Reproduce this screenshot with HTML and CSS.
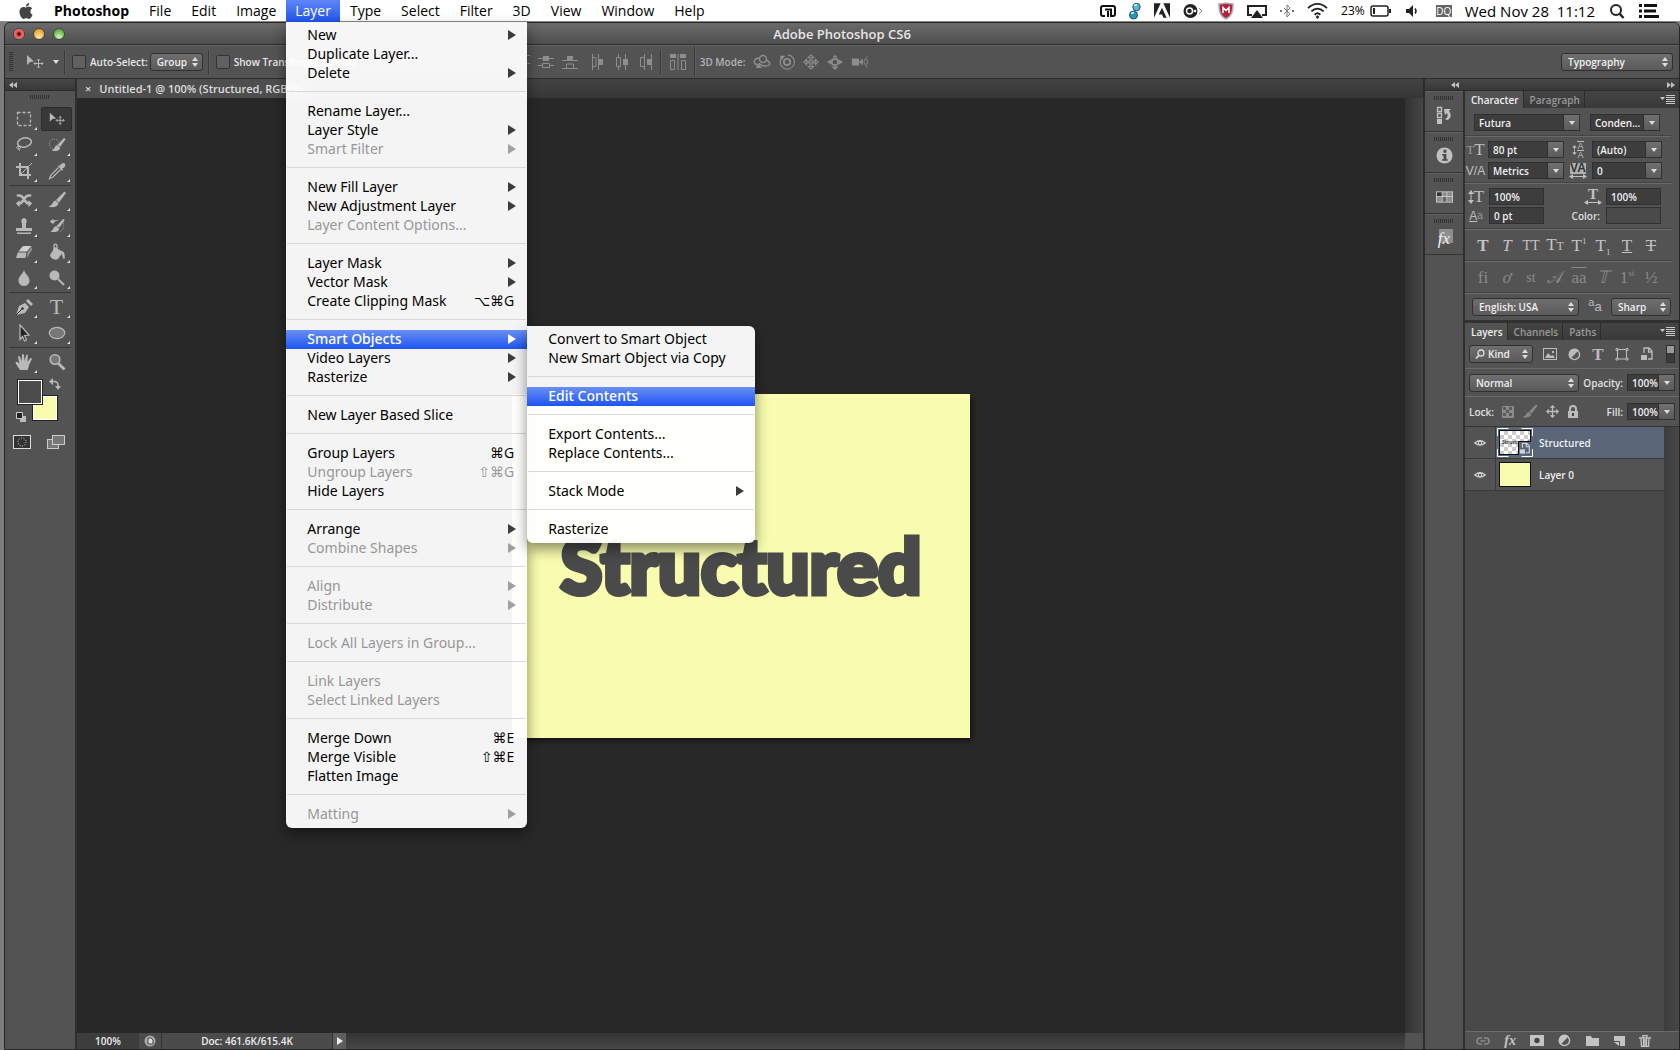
FILE: index.html
```
<!DOCTYPE html>
<html lang="en">

<head>
    <meta charset="UTF-8">
    <title>Adobe Photoshop CS6</title>
    <link rel="stylesheet" href="styles.css">
</head>

<body>
    <!-- icon sprite -->
    <svg class="sprite" aria-hidden="true">
        <symbol id="i-apple" viewBox="0 0 24 24"><path fill="#444" d="M12.152 6.896c-.948 0-2.415-1.078-3.96-1.04-2.04.027-3.91 1.183-4.961 3.014-2.117 3.675-.546 9.103 1.519 12.09 1.013 1.454 2.208 3.09 3.792 3.039 1.52-.065 2.09-.987 3.935-.987 1.831 0 2.35.987 3.96.948 1.637-.026 2.676-1.48 3.676-2.948 1.156-1.688 1.636-3.325 1.662-3.415-.039-.013-3.182-1.221-3.22-4.857-.026-3.04 2.48-4.494 2.597-4.559-1.429-2.09-3.623-2.324-4.39-2.376-2-.156-3.675 1.09-4.61 1.09zM15.53 3.83c.843-1.012 1.4-2.427 1.245-3.83-1.207.052-2.662.805-3.532 1.818-.78.896-1.454 2.338-1.273 3.714 1.338.104 2.715-.688 3.559-1.701"/></symbol>
        <symbol id="i-cast" viewBox="0 0 16 16"><path fill="none" stroke="#111" stroke-width="2" d="M5 13H3a2 2 0 0 1-2-2V5a2 2 0 0 1 2-2h10a2 2 0 0 1 2 2v6a2 2 0 0 1-2 2h-2V6.500H5M8 8v6"/></symbol>
        <symbol id="i-beads" viewBox="0 0 12 18"><circle cx="7.500" cy="5" r="3.700" fill="#58b7d6" stroke="#14546d"/><circle cx="4.500" cy="13" r="4" fill="#2f93bb" stroke="#14546d"/><path d="M5 3.500l3-1M2 11.500l3-1" stroke="#d8f4ff" stroke-width="1.500"/></symbol>
        <symbol id="i-adobe" viewBox="0 0 24 22"><path fill="#222" d="M0 0h10L0 22zM24 0H14l10 22zM12 7l7 15h-5l-2-5H7z"/></symbol>
        <symbol id="i-orb" viewBox="0 0 22 16"><circle cx="7.500" cy="8" r="7" fill="#222"/><circle cx="6.500" cy="8" r="3" fill="none" stroke="#fff" stroke-width="1.500"/><circle cx="12" cy="8" r="1.300" fill="#fff"/><path d="M16 5l3 3-3 3" fill="none" stroke="#888"/></symbol>
        <symbol id="i-shield" viewBox="0 0 16 18"><path fill="#b3203a" stroke="#aaa" stroke-width="1.500" d="M1 2c3 0 5-.5 7-1 2 .5 4 1 7 1 0 7-1 12-7 15C2 14 1 9 1 2z"/><path fill="none" stroke="#fff" stroke-width="1.500" d="M5 11V5.500l3 3 3-3V11"/></symbol>
        <symbol id="i-airplay" viewBox="0 0 20 16"><path fill="none" stroke="#222" stroke-width="2" d="M5 12H1V3h18v9h-4"/><path fill="#222" d="M10 7l6 8H4z"/></symbol>
        <symbol id="i-bt" viewBox="0 0 14 16"><path fill="none" stroke="#777" d="M4 5l6 6-3 3V2l3 3-6 6"/><path fill="#777" d="M0 7h2v2H0zM12 7h2v2h-2z"/></symbol>
        <symbol id="i-wifi" viewBox="0 0 22 18"><path fill="none" stroke="#222" stroke-width="2" d="M1 6.500c6-6 14-6 20 0M4.500 10c4-4 9-4 13 0M8 13.500c2-2 4-2 6 0"/><path fill="#222" d="M11 14l2 2-2 2-2-2z"/></symbol>
        <symbol id="i-battery" viewBox="0 0 22 14"><rect x="1" y="2" width="17" height="10" rx="2" fill="none" stroke="#222" stroke-width="1.500"/><path fill="#222" d="M3 4h2v6H3zM19 5h2v4h-2z"/></symbol>
        <symbol id="i-speaker" viewBox="0 0 18 14"><path fill="#222" d="M1 5h3l4-4v12L4 9H1z"/><path d="M10 4.500q2 2.500 0 5" fill="none" stroke="#222" stroke-width="1.500"/></symbol>
        <symbol id="i-search" viewBox="0 0 18 18"><circle cx="8" cy="8" r="5" fill="none" stroke="#222" stroke-width="2"/><path d="M11.500 11.500l4 4.500" stroke="#222" stroke-width="2.500"/></symbol>
        <symbol id="i-list" viewBox="0 0 20 14"><path fill="#111" d="M0 0h3v3H0zM5 0h13v3H5zM0 5.500h3v3H0zM5 5.500h12v3H5zM0 11h3v3H0zM5 11h15v3H5z"/></symbol>

        <symbol id="i-move" viewBox="0 0 20 16"><path fill="currentColor" d="M2 1l7 6.500-4 .5-3 3z"/><path fill="none" stroke="currentColor" d="M13.500 5v9M9 9.500h9M12 6.500l1.500-1.500L15 6.500M12 12.500l1.500 1.500 1.500-1.500M10.500 8L9 9.500l1.500 1.500M16.500 8L18 9.500 16.500 11"/></symbol>
        <symbol id="i-marquee" viewBox="0 0 18 18"><rect x="2.500" y="2.500" width="13" height="13" fill="none" stroke="currentColor" stroke-width="1.300" stroke-dasharray="3 2"/></symbol>
        <symbol id="i-lasso" viewBox="0 0 18 18"><ellipse cx="9.500" cy="6.500" rx="7" ry="4.500" transform="rotate(-12 9.500 6.500)" fill="none" stroke="currentColor" stroke-width="1.500"/><path d="M4 10c-3 0-3 3-.5 3s2.500-3.500.5-3c-1 2 0 4 1 5" fill="none" stroke="currentColor"/></symbol>
        <symbol id="i-quick" viewBox="0 0 20 18"><circle cx="7" cy="8" r="5.500" fill="none" stroke="currentColor" stroke-dasharray="1 1.500"/><path fill="currentColor" d="M18 1l1.500 1.500-6 8.500-3-2zM10 9l3.500 3c0 3-5 5-9.500 3 4-1 3-5 6-6z"/></symbol>
        <symbol id="i-crop" viewBox="0 0 18 18"><path fill="none" stroke="currentColor" stroke-width="2" d="M5 1v12h11M1 5h12v12"/><path stroke="currentColor" d="M6 12L17 1"/></symbol>
        <symbol id="i-dropper" viewBox="0 0 18 18"><path fill="currentColor" d="M10 4l1-1 1 1c1-3 4-4 5-2s-1 4-3 5l1 1-1 1z"/><path fill="none" stroke="currentColor" stroke-width="1.200" d="M10.500 5.500L3 13l-1.500 3.500L5 15l7.500-7.500"/></symbol>
        <symbol id="i-heal" viewBox="0 0 20 16"><path fill="none" stroke="currentColor" stroke-width="3" d="M2 3h3c5 0 5 9 11 9M18 3h-3C10 3 10 12 4 12"/><path fill="currentColor" d="M5 8v8l-4-4zM15 8v8l4-4z"/></symbol>
        <symbol id="i-brush" viewBox="0 0 18 18"><path fill="currentColor" d="M16.500.500L18 2l-7 9.500-3-2.500zM7.500 9.500l3 2.500c-.5 4-5.500 5-10.500 3.500 4.500-.5 4-5 7.500-6z"/></symbol>
        <symbol id="i-stamp" viewBox="0 0 18 18"><path fill="currentColor" d="M9 1a3 3 0 0 1 2 5v5h6v3H1v-3h6V6a3 3 0 0 1 2-5zM2 15.500h14V17H2z"/></symbol>
        <symbol id="i-history" viewBox="0 0 20 18"><path fill="currentColor" d="M17 1l1.500 1.500-6 8.500-3-2zM9 9l3.500 3c0 3-5 5-10 3 4-1 3-5 6.500-6zM2 4l4-3v2q4-1 7-1-5 1-7 4v1z"/><path d="M17 6q2 6-4 10" fill="none" stroke="currentColor" stroke-dasharray="1 1.500"/></symbol>
        <symbol id="i-eraser" viewBox="0 0 18 18"><path fill="#d0d0d0" d="M8 3h9l-5 6H3z"/><path fill="#8d8d8d" d="M17 3v4l-5 8V9z"/><path fill="currentColor" d="M3 9h9l-1 6H1z"/><path stroke="#555" fill="none" d="M3 9h9l5-6M12 9l-1 6"/></symbol>
        <symbol id="i-bucket" viewBox="0 0 18 18"><path fill="currentColor" d="M7 4l8 5-5 7c-3 2-8-1-8-4z"/><path d="M6 8V3c0-3 3-2 3 0v4" fill="none" stroke="currentColor" stroke-width="1.300"/><path fill="currentColor" d="M14 8c3 1 3 5 2.500 8C14 16 15 12 13 10z"/></symbol>
        <symbol id="i-drop" viewBox="0 0 18 18"><path fill="currentColor" d="M9 1c1 4 5.500 6 5.500 10.500a5.500 5.500 0 0 1-11 0C3.500 7 8 5 9 1z"/></symbol>
        <symbol id="i-dodge" viewBox="0 0 18 18"><circle cx="6.500" cy="6.500" r="5" fill="currentColor"/><path d="M10 10l6 6" stroke="currentColor" stroke-width="2"/></symbol>
        <symbol id="i-pen" viewBox="0 0 18 18"><path fill="currentColor" d="M1 17L4 8l6-3 4 4-4 6zM11 3l2-2 5 5-2 2z"/><path d="M1 17l6-6" stroke="#333"/><circle cx="7.500" cy="10.500" r="1.300" fill="#333"/></symbol>
        <symbol id="i-pick" viewBox="0 0 18 18"><path fill="#222" stroke="currentColor" stroke-width="1.200" d="M5 1l9 10-4.500.5 2 4.500-2 1-2-4.500-2.500 3z"/></symbol>
        <symbol id="i-ellipse" viewBox="0 0 18 18"><ellipse cx="9" cy="9" rx="7.700" ry="5.700" fill="#777" stroke="currentColor" stroke-width="1.200"/></symbol>
        <symbol id="i-hand" viewBox="0 0 18 18"><path fill="currentColor" d="M5 17C3 14 1 11 .5 9.500 1 8 3 9 4.500 11L3 4c0-1.500 1.500-1.500 2 0l1.500 4L7 2c.2-1.500 1.800-1.500 2 0l.5 6L11 2.500c.5-1.500 2-1 1.800.5L12.500 9 15 5.500c1-1 2.200-.2 1.700 1L14 12c-.5 3-1 4-1.500 5z"/></symbol>
        <symbol id="i-zoom" viewBox="0 0 18 18"><circle cx="7" cy="6.500" r="4.800" fill="#777" stroke="currentColor" stroke-width="1.600"/><path d="M10.500 10.500l6 6" stroke="currentColor" stroke-width="2.800"/></symbol>
        <symbol id="i-swap" viewBox="0 0 12 12"><path d="M2 3.500h3q4 0 4 4V10" fill="none" stroke="currentColor" stroke-width="1.500"/><path fill="currentColor" d="M4 0v7L0 3.500zM6 8h6l-3 4z"/></symbol>
        <symbol id="i-default" viewBox="0 0 10 10"><path fill="#bbb" d="M4 4h6v6H4z"/><path fill="#222" stroke="#ccc" d="M.5.500h6v6h-6z"/></symbol>
        <symbol id="i-mask" viewBox="0 0 18 14"><rect x=".500" y=".500" width="17" height="13" fill="#333" stroke="#ddd"/><circle cx="9" cy="7" r="4" fill="none" stroke="#ddd" stroke-dasharray="1 1.500"/></symbol>
        <symbol id="i-screen" viewBox="0 0 18 14"><rect x=".500" y="4.500" width="11" height="9" fill="#777" stroke="#ccc"/><rect x="5.500" y=".500" width="12" height="9" fill="#777" stroke="#ccc"/></symbol>

        <symbol id="i-av1" viewBox="0 0 16 16"><path stroke="currentColor" fill="none" d="M0 1.500h16M0 9.500h16M4 12.500h8v3H4z"/><path fill="currentColor" d="M5 3h6v3H5z"/></symbol>
        <symbol id="i-av2" viewBox="0 0 16 16"><path stroke="currentColor" fill="none" d="M0 4.500h16M0 11.500h4m8 0h4M4.500 9.500h7v4h-7z"/><path fill="currentColor" d="M5 2h6v5H5z"/></symbol>
        <symbol id="i-av3" viewBox="0 0 16 16"><path stroke="currentColor" fill="none" d="M0 6.500h16M0 14.500h16M4.500 14v-4h7v4"/><path fill="currentColor" d="M5 2h6v4H5z"/></symbol>
        <symbol id="i-ah1" viewBox="0 0 16 16"><path stroke="currentColor" fill="none" d="M2.500 0v16M8.500 0v16M3 3.500h3v9H3"/><path fill="currentColor" d="M9 5h4v6H9z"/></symbol>
        <symbol id="i-ah2" viewBox="0 0 16 16"><path stroke="currentColor" fill="none" d="M4.500 0v3m0 10v3M11.500 0v16M2.500 3.500h4v9h-4z"/><path fill="currentColor" d="M9 5h5v6H9z"/></symbol>
        <symbol id="i-ah3" viewBox="0 0 16 16"><path stroke="currentColor" fill="none" d="M6.500 0v16M13.500 0v16M6 3.500H2.500v9H6"/><path fill="currentColor" d="M9 5h4v6H9z"/></symbol>
        <symbol id="i-auto" viewBox="0 0 16 16"><path fill="currentColor" d="M0 0h6v4H0zM10 0h6v4h-6zM7.500 0h1v16h-1z"/><path stroke="currentColor" fill="none" d="M.5 6.500h4v9h-4zM11.500 6.500h4v9h-4z"/></symbol>
        <symbol id="i-orbit" viewBox="0 0 18 16"><circle cx="10" cy="5" r="3.500" fill="none" stroke="currentColor" stroke-width="1.500"/><path fill="none" stroke="currentColor" stroke-width="1.500" d="M6 4C0 5 0 9 4 11M13 6c5 2 5 6 0 6-3 0-6-1-7-3"/><path fill="currentColor" d="M3 14l6 0-4-5z"/></symbol>
        <symbol id="i-roll" viewBox="0 0 18 18"><circle cx="9" cy="9" r="3.500" fill="none" stroke="currentColor" stroke-width="2"/><path fill="none" stroke="currentColor" stroke-width="1.300" d="M4 3a8 8 0 1 0 6-2"/><path fill="currentColor" d="M1 2h6L3 7z"/></symbol>
        <symbol id="i-pan" viewBox="0 0 18 18"><path fill="none" stroke="currentColor" stroke-width="1.200" d="M9 1l3 3h-2v4h4V6l3 3-3 3v-2h-4v4h2l-3 3-3-3h2v-4H4v2L1 9l3-3v2h4V4H6z"/></symbol>
        <symbol id="i-lockmove" viewBox="0 0 14 14"><path stroke="currentColor" stroke-width="1.500" d="M7 1v12M1 7h12"/><path fill="currentColor" d="M7 0l3 3H4zM7 14l3-3H4zM0 7l3-3v6zM14 7l-3-3v6z"/></symbol>
        <symbol id="i-slide" viewBox="0 0 18 18"><circle cx="9" cy="9" r="3.500" fill="none" stroke="currentColor" stroke-width="1.800"/><path fill="currentColor" d="M9 1l3 3H6zM9 18l4-4H5zM0 9l5-3v6zM18 9l-5-3v6z"/></symbol>
        <symbol id="i-cam" viewBox="0 0 20 16"><path fill="currentColor" d="M1 4h8v8H1zM9 8l4-4v8z"/><path d="M18 2l-4 6 4 6M18 5v6" fill="none" stroke="currentColor"/></symbol>

        <symbol id="i-hist" viewBox="0 0 18 18"><path fill="none" stroke="currentColor" stroke-width="1.300" d="M2.500 1.500h4v4h-4zM2.500 7.500h4v4h-4z"/><path fill="currentColor" d="M2 13h5v5H2zM9 3h7l-2 2q4 5-1 9-2 0-3-1 4-2 2-6l-2 2z"/></symbol>
        <symbol id="i-info" viewBox="0 0 18 18"><circle cx="9" cy="9" r="8.500" fill="currentColor"/><path fill="#484848" d="M8 3h3v3H8zM6.500 7.500H11V13h1.500v1.500h-6V13H8V9H6.500z"/></symbol>
        <symbol id="i-swatches" viewBox="0 0 18 12"><rect width="18" height="12" fill="#c4c4c4"/><path fill="#333" d="M1 1h5v4H1z"/><path fill="#8d8d8d" d="M7 1h4v4H7zM12 1h5v4h-5zM1 6h5v5H1zM12 6h5v5h-5z"/><path fill="#666" d="M7 6h4v5H7z"/></symbol>
        <symbol id="i-menu" viewBox="0 0 15 9"><path fill="#c8c8c8" d="M0 2h5L2.500 5zM6 0h9v1H6zM6 2h9v1H6zM6 4h9v1H6zM6 6h9v1H6zM6 8h9v1H6z"/></symbol>
        <symbol id="i-dleft" viewBox="0 0 8 6"><path fill="#c0c0c0" d="M4 0v6L0 3zM8 0v6L4 3z"/></symbol>
        <symbol id="i-dright" viewBox="0 0 8 6"><path fill="#c0c0c0" d="M0 0v6l4-3zM4 0v6l4-3z"/></symbol>
        <symbol id="i-vline" viewBox="0 0 6 14"><path stroke="currentColor" d="M3 2v10"/><path fill="currentColor" d="M3 0l3 4H0zM3 14l3-4H0z"/></symbol>
        <symbol id="i-hline" viewBox="0 0 18 5"><path stroke="currentColor" d="M2 2.500h14"/><path fill="currentColor" d="M0 2.500L4 0v5zM18 2.500L14 0v5z"/></symbol>

        <symbol id="i-glass" viewBox="0 0 10 10"><circle cx="6" cy="4" r="3" fill="none" stroke="#ddd" stroke-width="1.300"/><path d="M4 6L1 9.500" stroke="#ddd" stroke-width="1.600"/></symbol>
        <symbol id="i-image" viewBox="0 0 14 12"><rect x=".500" y=".500" width="13" height="11" fill="none" stroke="currentColor"/><path fill="currentColor" d="M2 10l3-5 3 3 2-1 2 3zM9 3h2v2H9z"/></symbol>
        <symbol id="i-adjust" viewBox="0 0 14 14"><circle cx="7" cy="7" r="5.500" fill="#555" stroke="currentColor" stroke-width="1.500"/><path fill="currentColor" d="M11.500 2.500a6.300 6.300 0 0 0-9 9z"/></symbol>
        <symbol id="i-shape" viewBox="0 0 14 14"><path fill="none" stroke="currentColor" d="M1 1.500h2v2H1zM11 1.500h2v2h-2zM1 11h2v2H1zM11 11h2v2h-2zM3 2.500h8M3 12h8M2.500 3.500V11M11.500 3.500V11"/></symbol>
        <symbol id="i-smart" viewBox="0 0 14 14"><path fill="none" stroke="currentColor" stroke-width="1.300" d="M4 6V1h5l3 3v8H8M8.500 1v4H12"/><path fill="currentColor" d="M1 8h6v5H1z"/></symbol>
        <symbol id="i-checker" viewBox="0 0 12 12"><rect width="12" height="12" fill="#8b8b8b"/><path fill="#5b5b5b" d="M1 1h3v3H1zM7 1h3v3H7zM4 4h3v3H4zM1 7h3v3H1zM7 7h3v3H7z"/></symbol>
        <symbol id="i-lock" viewBox="0 0 12 14"><path fill="currentColor" d="M1 6h10v7H1z"/><path d="M3 6V4a3 3 0 0 1 6 0v2" fill="none" stroke="currentColor" stroke-width="2"/><path fill="#444" d="M5 8h2v3H5z"/></symbol>
        <symbol id="i-eye" viewBox="0 0 12 10"><path fill="#777" stroke="#c9c9c9" stroke-width="1.200" d="M.7 5Q6 0 11.300 5 6 9.500.7 5z"/><circle cx="6" cy="5" r="2" fill="#ddd"/><circle cx="6" cy="5" r="1" fill="#333"/></symbol>
        <symbol id="i-corners" viewBox="0 0 36 29"><path fill="none" stroke="#fff" d="M.5 8V.500h11M24.500.500h11V8M35.500 21v7.500h-11M11.500 28.500H.500V21"/></symbol>
        <symbol id="i-link" viewBox="0 0 14 8"><path fill="none" stroke="#8a8a8a" stroke-width="1.600" d="M6 1H4a3 3 0 0 0 0 6h2M8 1h2a3 3 0 0 1 0 6H8M4.500 4h5"/></symbol>
        <symbol id="i-addmask" viewBox="0 0 14 12"><path fill="currentColor" d="M0 0h14v11H0z"/><circle cx="7" cy="5.500" r="2.700" fill="#444"/></symbol>
        <symbol id="i-folder" viewBox="0 0 13 11"><path fill="currentColor" d="M0 1h5l1 2h7v8H0z"/></symbol>
        <symbol id="i-new" viewBox="0 0 12 12"><path fill="currentColor" d="M1 1h11v10H7V6H1z"/><path fill="currentColor" d="M1 7h5v4z"/></symbol>
        <symbol id="i-trash" viewBox="0 0 12 12"><path fill="none" stroke="currentColor" stroke-width="1.300" d="M0 3h12M4 2.500V.700h4v1.800M2 4l.5 7.300h7L10 4M4.500 4v7M6 4v7M7.500 4v7"/></symbol>
        <symbol id="i-docpage" viewBox="0 0 12 12"><circle cx="6" cy="6" r="5.500" fill="#aaa"/><path fill="#ddd" stroke="#444" d="M4 3h3l2 2v4H4z"/></symbol>
    </svg>

    <header class="menubar">
        <nav class="menus">
            <button class="menu-btn apple" aria-label="Apple"><svg width="16" height="18"><use href="#i-apple"/></svg></button>
            <button class="menu-btn app-name">Photoshop</button>
            <button class="menu-btn">File</button>
            <button class="menu-btn">Edit</button>
            <button class="menu-btn">Image</button>
            <div class="menu-open">
                <button class="menu-btn active">Layer</button>
                <ul class="menu">
                    <li><button class="more">New</button></li>
                    <li><button>Duplicate Layer...</button></li>
                    <li><button class="more">Delete</button></li>
                    <li class="sep"></li>
                    <li><button>Rename Layer...</button></li>
                    <li><button class="more">Layer Style</button></li>
                    <li><button class="more" disabled>Smart Filter</button></li>
                    <li class="sep"></li>
                    <li><button class="more">New Fill Layer</button></li>
                    <li><button class="more">New Adjustment Layer</button></li>
                    <li><button disabled>Layer Content Options...</button></li>
                    <li class="sep"></li>
                    <li><button class="more">Layer Mask</button></li>
                    <li><button class="more">Vector Mask</button></li>
                    <li><button>Create Clipping Mask <kbd>⌥⌘G</kbd></button></li>
                    <li class="sep"></li>
                    <li class="has-sub">
                        <button class="more selected">Smart Objects</button>
                        <ul class="menu submenu">
                            <li><button>Convert to Smart Object</button></li>
                            <li><button>New Smart Object via Copy</button></li>
                            <li class="sep"></li>
                            <li><button class="selected">Edit Contents</button></li>
                            <li class="sep"></li>
                            <li><button>Export Contents...</button></li>
                            <li><button>Replace Contents...</button></li>
                            <li class="sep"></li>
                            <li><button class="more">Stack Mode</button></li>
                            <li class="sep"></li>
                            <li><button>Rasterize</button></li>
                        </ul>
                    </li>
                    <li><button class="more">Video Layers</button></li>
                    <li><button class="more">Rasterize</button></li>
                    <li class="sep"></li>
                    <li><button>New Layer Based Slice</button></li>
                    <li class="sep"></li>
                    <li><button>Group Layers <kbd>⌘G</kbd></button></li>
                    <li><button disabled>Ungroup Layers <kbd>⇧⌘G</kbd></button></li>
                    <li><button>Hide Layers</button></li>
                    <li class="sep"></li>
                    <li><button class="more">Arrange</button></li>
                    <li><button class="more" disabled>Combine Shapes</button></li>
                    <li class="sep"></li>
                    <li><button class="more" disabled>Align</button></li>
                    <li><button class="more" disabled>Distribute</button></li>
                    <li class="sep"></li>
                    <li><button disabled>Lock All Layers in Group...</button></li>
                    <li class="sep"></li>
                    <li><button disabled>Link Layers</button></li>
                    <li><button disabled>Select Linked Layers</button></li>
                    <li class="sep"></li>
                    <li><button>Merge Down <kbd>⌘E</kbd></button></li>
                    <li><button>Merge Visible <kbd>⇧⌘E</kbd></button></li>
                    <li><button>Flatten Image</button></li>
                    <li class="sep"></li>
                    <li><button class="more" disabled>Matting</button></li>
                </ul>
            </div>
            <button class="menu-btn">Type</button>
            <button class="menu-btn">Select</button>
            <button class="menu-btn">Filter</button>
            <button class="menu-btn">3D</button>
            <button class="menu-btn">View</button>
            <button class="menu-btn">Window</button>
            <button class="menu-btn">Help</button>
        </nav>
        <div class="status-icons">
            <svg width="16" height="16"><use href="#i-cast"/></svg>
            <svg width="12" height="18"><use href="#i-beads"/></svg>
            <svg width="16" height="15"><use href="#i-adobe"/></svg>
            <svg width="22" height="16"><use href="#i-orb"/></svg>
            <svg width="16" height="18"><use href="#i-shield"/></svg>
            <svg width="20" height="16"><use href="#i-airplay"/></svg>
            <svg width="14" height="16"><use href="#i-bt"/></svg>
            <svg width="21" height="17"><use href="#i-wifi"/></svg>
            <span class="power">23% <svg width="22" height="14"><use href="#i-battery"/></svg></span>
            <svg width="18" height="14"><use href="#i-speaker"/></svg>
            <span class="input-source">DQ</span>
            <span class="clock">Wed Nov 28 &nbsp;11:12</span>
            <svg width="18" height="18"><use href="#i-search"/></svg>
            <svg width="20" height="14"><use href="#i-list"/></svg>
        </div>
    </header>

    <div class="window">
        <div class="titlebar">
            <div class="lights">
                <button class="light red" aria-label="Close"></button>
                <button class="light amber" aria-label="Minimize"></button>
                <button class="light green" aria-label="Zoom"></button>
            </div>
            <h1>Adobe Photoshop CS6</h1>
        </div>

        <div class="options">
            <span class="grip-v"></span>
            <button class="preset" aria-label="Move tool presets"><svg width="20" height="16"><use href="#i-move"/></svg><i class="caret"></i></button>
            <span class="rule"></span>
            <label class="check"><input type="checkbox"> Auto-Select:</label>
            <span class="select group-select"><select aria-label="Auto-select target"><option>Group</option></select></span>
            <span class="rule"></span>
            <label class="check transform"><input type="checkbox"> Show Transform Controls</label>
            <div class="aligners">
                <svg width="16" height="16"><use href="#i-av1"/></svg>
                <svg width="16" height="16"><use href="#i-av2"/></svg>
                <svg width="16" height="16"><use href="#i-av3"/></svg>
            </div>
            <div class="aligners">
                <svg width="16" height="16"><use href="#i-ah1"/></svg>
                <svg width="16" height="16"><use href="#i-ah2"/></svg>
                <svg width="16" height="16"><use href="#i-ah3"/></svg>
            </div>
            <span class="rule"></span>
            <div class="aligners auto"><svg width="16" height="16"><use href="#i-auto"/></svg></div>
            <span class="rule tall"></span>
            <span class="mode-label">3D Mode:</span>
            <div class="aligners">
                <svg width="18" height="16"><use href="#i-orbit"/></svg>
                <svg width="16" height="16"><use href="#i-roll"/></svg>
                <svg width="16" height="16"><use href="#i-pan"/></svg>
                <svg width="16" height="16"><use href="#i-slide"/></svg>
                <svg width="18" height="16"><use href="#i-cam"/></svg>
            </div>
            <span class="select workspace-select"><select aria-label="Workspace"><option>Typography</option></select></span>
        </div>

        <main class="workspace">
            <aside class="tools">
                <div class="dock-head"><svg width="8" height="6"><use href="#i-dleft"/></svg></div>
                <span class="grip"></span>
                <div class="tool-group">
                    <button class="tool fly" aria-label="Marquee"><svg><use href="#i-marquee"/></svg></button>
                    <button class="tool on" aria-label="Move"><svg><use href="#i-move"/></svg></button>
                    <button class="tool fly" aria-label="Lasso"><svg><use href="#i-lasso"/></svg></button>
                    <button class="tool fly" aria-label="Quick selection"><svg><use href="#i-quick"/></svg></button>
                    <button class="tool fly" aria-label="Crop"><svg><use href="#i-crop"/></svg></button>
                    <button class="tool fly" aria-label="Eyedropper"><svg><use href="#i-dropper"/></svg></button>
                </div>
                <div class="tool-group">
                    <button class="tool fly" aria-label="Content-aware move"><svg><use href="#i-heal"/></svg></button>
                    <button class="tool fly" aria-label="Brush"><svg><use href="#i-brush"/></svg></button>
                    <button class="tool fly" aria-label="Clone stamp"><svg><use href="#i-stamp"/></svg></button>
                    <button class="tool fly" aria-label="History brush"><svg><use href="#i-history"/></svg></button>
                    <button class="tool fly" aria-label="Eraser"><svg><use href="#i-eraser"/></svg></button>
                    <button class="tool fly" aria-label="Paint bucket"><svg><use href="#i-bucket"/></svg></button>
                    <button class="tool fly" aria-label="Blur"><svg><use href="#i-drop"/></svg></button>
                    <button class="tool fly" aria-label="Dodge"><svg><use href="#i-dodge"/></svg></button>
                </div>
                <div class="tool-group">
                    <button class="tool fly" aria-label="Pen"><svg><use href="#i-pen"/></svg></button>
                    <button class="tool fly type-tool">T</button>
                    <button class="tool fly" aria-label="Path selection"><svg><use href="#i-pick"/></svg></button>
                    <button class="tool fly" aria-label="Ellipse"><svg><use href="#i-ellipse"/></svg></button>
                </div>
                <div class="tool-group last">
                    <button class="tool fly" aria-label="Hand"><svg><use href="#i-hand"/></svg></button>
                    <button class="tool" aria-label="Zoom"><svg><use href="#i-zoom"/></svg></button>
                </div>
                <div class="swatch-pair">
                    <button class="swatch back" aria-label="Background colour"></button>
                    <button class="swatch front" aria-label="Foreground colour"></button>
                    <svg class="swap" width="12" height="12"><use href="#i-swap"/></svg>
                    <svg class="defaults" width="10" height="10"><use href="#i-default"/></svg>
                </div>
                <div class="view-modes">
                    <svg width="18" height="14"><use href="#i-mask"/></svg>
                    <svg width="18" height="14"><use href="#i-screen"/></svg>
                </div>
            </aside>

            <section class="document">
                <div class="doc-tabs">
                    <div class="doc-tab"><button aria-label="Close document">×</button> Untitled-1 @ 100% (Structured, RGB/8)</div>
                </div>
                <div class="doc-body">
                    <div class="stage">
                        <div class="artboard">Structured</div>
                    </div>
                    <div class="scroll-v"></div>
                </div>
                <footer class="doc-status">
                    <span class="zoom-level">100%</span>
                    <span class="doc-icon"><svg width="12" height="12"><use href="#i-docpage"/></svg></span>
                    <span class="doc-size">Doc: 461.6K/615.4K</span>
                    <button class="play" aria-label="Status options"></button>
                    <span class="scroll-h"></span>
                    <span class="corner"></span>
                </footer>
            </section>

            <aside class="dock">
                <div class="dock-head split"><svg width="8" height="6"><use href="#i-dleft"/></svg><svg width="8" height="6"><use href="#i-dright"/></svg></div>
                <div class="dock-cols">
                    <div class="strip">
                        <button class="strip-btn" aria-label="History"><i class="grip"></i><svg width="18" height="18"><use href="#i-hist"/></svg></button>
                        <button class="strip-btn" aria-label="Info"><i class="grip"></i><svg width="17" height="17"><use href="#i-info"/></svg></button>
                        <button class="strip-btn" aria-label="Swatches"><i class="grip"></i><svg width="17" height="18"><use href="#i-swatches"/></svg></button>
                        <button class="strip-btn" aria-label="Styles"><i class="grip"></i><span class="fx-tile">fx</span></button>
                    </div>
                    <div class="panels">
                        <section class="panel character">
                            <div class="tabs">
                                <button class="tab on">Character</button>
                                <button class="tab">Paragraph</button>
                                <svg width="15" height="9"><use href="#i-menu"/></svg>
                            </div>
                            <div class="block fonts">
                                <span class="combo"><select aria-label="Font family"><option>Futura</option></select></span>
                                <span class="combo"><select aria-label="Font style"><option>Conden...</option></select></span>
                            </div>
                            <div class="block metrics">
                                <label for="size" class="glyph"><small>T</small>T</label>
                                <span class="combo"><select id="size"><option>80 pt</option></select></span>
                                <label for="leading" class="glyph stacked"><svg width="5" height="10"><use href="#i-vline"/></svg><span><b>A</b><b>A</b></span></label>
                                <span class="combo"><select id="leading"><option>(Auto)</option></select></span>
                                <label for="kerning" class="glyph sans">V/A</label>
                                <span class="combo"><select id="kerning"><option>Metrics</option></select></span>
                                <label for="tracking" class="glyph sans tracking"><b>VA</b><svg width="18" height="5"><use href="#i-hline"/></svg></label>
                                <span class="combo"><select id="tracking"><option>0</option></select></span>
                            </div>
                            <div class="block scales">
                                <label for="vscale" class="glyph"><svg width="6" height="14"><use href="#i-vline"/></svg>T</label>
                                <input id="vscale" class="num" value="100%">
                                <label for="hscale" class="glyph hscale">T<svg width="18" height="5"><use href="#i-hline"/></svg></label>
                                <input id="hscale" class="num" value="100%">
                                <label for="baseline" class="glyph sans shift"><u>A</u><small>a</small></label>
                                <input id="baseline" class="num" value="0 pt">
                                <span class="color-label">Color:</span>
                                <button class="num color-well" aria-label="Text colour"></button>
                            </div>
                            <div class="block faux">
                                <button><b>T</b></button>
                                <button><em>T</em></button>
                                <button>TT</button>
                                <button>T<small>T</small></button>
                                <button>T<sup>1</sup></button>
                                <button>T<sub>1</sub></button>
                                <button><u>T</u></button>
                                <button><s>T</s></button>
                            </div>
                            <div class="block faux opentype">
                                <button>fi</button>
                                <button><em>ơ</em></button>
                                <button>st</button>
                                <button>𝒜</button>
                                <button class="over">aa</button>
                                <button><em>𝕋</em></button>
                                <button>1<sup>st</sup></button>
                                <button>½</button>
                            </div>
                            <div class="block lang">
                                <span class="select"><select aria-label="Language"><option>English: USA</option></select></span>
                                <label for="aa" class="aa"><sup>a</sup>a</label>
                                <span class="select"><select id="aa"><option>Sharp</option></select></span>
                            </div>
                        </section>

                        <section class="panel layers">
                            <div class="tabs">
                                <button class="tab on">Layers</button>
                                <button class="tab">Channels</button>
                                <button class="tab">Paths</button>
                                <svg width="15" height="9"><use href="#i-menu"/></svg>
                            </div>
                            <div class="layer-row filter">
                                <span class="select kind"><svg width="10" height="10"><use href="#i-glass"/></svg><select aria-label="Filter type"><option>Kind</option></select></span>
                                <div class="filter-icons">
                                    <svg width="14" height="12"><use href="#i-image"/></svg>
                                    <svg width="13" height="13"><use href="#i-adjust"/></svg>
                                    <span class="serif-t">T</span>
                                    <svg width="14" height="14"><use href="#i-shape"/></svg>
                                    <svg width="14" height="14"><use href="#i-smart"/></svg>
                                </div>
                                <button class="switch" aria-label="Toggle filter"></button>
                            </div>
                            <div class="layer-row">
                                <span class="select blend"><select aria-label="Blend mode"><option>Normal</option></select></span>
                                <label for="opacity">Opacity:</label>
                                <span class="combo pct"><select id="opacity"><option>100%</option></select></span>
                            </div>
                            <div class="layer-row locks">
                                <span>Lock:</span>
                                <svg width="12" height="12"><use href="#i-checker"/></svg>
                                <svg width="16" height="15" class="dim"><use href="#i-brush"/></svg>
                                <svg width="13" height="13"><use href="#i-lockmove"/></svg>
                                <svg width="12" height="14"><use href="#i-lock"/></svg>
                                <label for="fill">Fill:</label>
                                <span class="combo pct"><select id="fill"><option>100%</option></select></span>
                            </div>
                            <div class="layer-list">
                                <ul>
                                    <li class="layer current">
                                        <button class="eye" aria-label="Hide Structured"><svg width="12" height="10"><use href="#i-eye"/></svg></button>
                                        <span class="thumb checker"><i>Structured</i><svg class="badge" width="13" height="14"><use href="#i-smart"/></svg><svg class="corners" width="36" height="29"><use href="#i-corners"/></svg></span>
                                        <span>Structured</span>
                                    </li>
                                    <li class="layer">
                                        <button class="eye" aria-label="Hide Layer 0"><svg width="12" height="10"><use href="#i-eye"/></svg></button>
                                        <span class="thumb yellow"></span>
                                        <span>Layer 0</span>
                                    </li>
                                </ul>
                            </div>
                            <div class="layer-actions">
                                <svg width="14" height="8"><use href="#i-link"/></svg>
                                <span class="fx">fx</span>
                                <svg width="14" height="12"><use href="#i-addmask"/></svg>
                                <svg width="13" height="13"><use href="#i-adjust"/></svg>
                                <svg width="13" height="11"><use href="#i-folder"/></svg>
                                <svg width="12" height="12"><use href="#i-new"/></svg>
                                <svg width="12" height="12"><use href="#i-trash"/></svg>
                            </div>
                        </section>
                    </div>
                </div>
            </aside>
        </main>
    </div>
</body>

</html>
```

FILE: styles.css
```
* {
    box-sizing: border-box;
}

body {
    margin: 0;
    height: 100vh;
    display: flex;
    flex-direction: column;
    overflow: hidden;
    background: #7d7d7d;
    color: #e6e6e6;
    font: 600 10px/14px "Open Sans", "Noto Sans", sans-serif;
}

button,
select,
input {
    font: inherit;
    color: inherit;
    margin: 0;
    padding: 0;
    border: 0;
    background: none;
    border-radius: 0;
}

ul {
    list-style: none;
    margin: 0;
    padding: 0;
}

svg {
    display: block;
    flex: none;
}

.sprite {
    position: absolute;
    width: 0;
    height: 0;
}

/* Menu bar */
.menubar {
    flex: none;
    height: 22px;
    display: flex;
    justify-content: space-between;
    background: #fff;
    border-bottom: 1px solid #8a8a8a;
    color: #000;
    font: 14px/20px "Open Sans", "Noto Sans", sans-serif;
    position: relative;
    z-index: 10;
}

.menus {
    display: flex;
    padding-left: 8px;
}

.menu-btn {
    height: 21px;
    padding: 0 10px;
}

.app-name {
    font-weight: 700;
}

.menu-btn.active {
    height: 22px;
    padding: 0 9px;
    background: linear-gradient(#5f86f7, #1f55ee);
    color: #fff;
}

.menu-open {
    position: relative;
}

.menu {
    position: absolute;
    top: 22px;
    left: 0;
    width: 241px;
    padding: 4px 0;
    background: rgba(255, 255, 255, .95);
    border-radius: 0 0 6px 6px;
    box-shadow: 0 6px 14px rgba(0, 0, 0, .45);
    font-family: "Noto Sans", "Open Sans", sans-serif;
}

.menu li {
    height: 19px;
}

.menu .sep {
    padding: 8px 1px 0;
}

.menu .sep::before {
    content: "";
    display: block;
    border-top: 1px solid #d8d8d8;
}

.menu button {
    display: flex;
    align-items: center;
    justify-content: space-between;
    width: 100%;
    height: 19px;
    padding: 0 11px 1px 21px;
    text-align: left;
    line-height: 18px;
}

.menu button:disabled {
    color: #979797;
}

.menu .more::after {
    content: "";
    border: 5px solid transparent;
    border-left: 8px solid #3c3c3c;
    border-right: 0;
}

.menu .more:disabled::after {
    border-left-color: #a0a0a0;
}

.menu .selected {
    background: linear-gradient(#6a8ff5, #1c55f0);
    color: #fff;
    font-weight: 500;
}

.menu .selected.more::after {
    border-left-color: #fff;
}

.menu kbd {
    margin-right: 2px;
    font: 14px/18px "Open Sans", "DejaVu Sans", sans-serif;
}

.has-sub {
    position: relative;
}

.submenu {
    top: -4px;
    left: 100%;
    width: 228px;
    border-radius: 0 6px 6px 6px;
}

.status-icons {
    display: flex;
    align-items: center;
    gap: 13px;
    padding-right: 21px;
}

.clock {
    font-size: 15px;
}

.power {
    display: flex;
    align-items: center;
    gap: 5px;
    font-size: 12px;
}

.input-source {
    width: 16px;
    background: #666;
    color: #fff;
    font: 10px/12px "Open Sans", sans-serif;
    text-align: center;
}

/* App window */
.window {
    flex: 1;
    min-height: 0;
    margin-left: 4px;
    display: flex;
    flex-direction: column;
    background: #535353;
    border: 1px solid #262626;
    border-radius: 6px 6px 0 0;
}

.titlebar {
    flex: none;
    height: 22px;
    display: flex;
    align-items: center;
    background: linear-gradient(#6b6b6b, #4e4e4e);
    border-bottom: 1px solid #2c2c2c;
    border-radius: 5px 5px 0 0;
}

.titlebar h1 {
    flex: 1;
    margin: 0 72px 0 0;
    text-align: center;
    font: 600 13px/20px "Open Sans", sans-serif;
}

.lights {
    display: flex;
    gap: 8px;
    width: 72px;
    padding-left: 8px;
}

.light {
    width: 12px;
    height: 12px;
    border-radius: 50%;
    border: 1px solid #444;
}

.red {
    background: radial-gradient(circle, #5e0a08 20%, #e0443e 30%, #ffb0a8);
}

.amber {
    background: radial-gradient(circle at 50% 80%, #ffe9a0, #eca73c 70%);
}

.green {
    background: radial-gradient(circle at 50% 80%, #d4f5b0, #62b34b 70%);
}

/* Options bar */
.options {
    flex: none;
    height: 34px;
    display: flex;
    align-items: center;
    padding: 0 6px 1px 4px;
    border-top: 1px solid #666;
    border-bottom: 1px solid #2c2c2c;
}

.grip-v {
    width: 4px;
    height: 20px;
    background: repeating-linear-gradient(#333 0 1px, transparent 1px 2px);
}

.preset {
    display: flex;
    align-items: center;
    gap: 8px;
    margin: 0 5px 0 12px;
    color: #b5b5b5;
}

.caret {
    border: 3px solid transparent;
    border-top: 4px solid #ddd;
    border-bottom: 0;
}

.rule {
    width: 2px;
    height: 24px;
    border-left: 1px solid #3a3a3a;
    border-right: 1px solid #5e5e5e;
}

.rule.tall {
    height: 31px;
}

.check {
    display: flex;
    align-items: center;
    gap: 4px;
    padding-left: 6px;
    white-space: nowrap;
}

.check input {
    appearance: none;
    width: 14px;
    height: 14px;
    background: #606060;
    border: 1px solid #333;
    border-radius: 2px;
}

.transform {
    width: 298px;
}

.select,
.combo {
    position: relative;
    display: block;
    height: 18px;
}

.select select,
.combo select {
    appearance: none;
    display: block;
    width: 100%;
    height: 100%;
    padding: 0 6px;
    border: 1px solid #303030;
    color: #f0f0f0;
}

.select select {
    background: linear-gradient(#6f6f6f, #5a5a5a);
    border-radius: 3px;
}

.select::before,
.select::after {
    content: "";
    position: absolute;
    right: 5px;
    border: 3px solid transparent;
    pointer-events: none;
}

.select::before {
    top: 4px;
    border-top: 0;
    border-bottom: 4px solid #ddd;
}

.select::after {
    bottom: 4px;
    border-bottom: 0;
    border-top: 4px solid #ddd;
}

.combo {
    height: 17px;
}

.combo select {
    background: #3d3d3d;
    padding: 0 4px;
}

.combo::before {
    content: "";
    position: absolute;
    top: 1px;
    right: 1px;
    bottom: 1px;
    width: 15px;
    background: linear-gradient(#707070, #5b5b5b);
    border-left: 1px solid #303030;
    pointer-events: none;
}

.combo::after {
    content: "";
    position: absolute;
    top: 7px;
    right: 5px;
    border: 3px solid transparent;
    border-top: 4px solid #ddd;
    border-bottom: 0;
    pointer-events: none;
}

.group-select {
    width: 53px;
    margin: 0 5px 0 2px;
}

.workspace-select {
    width: 112px;
    margin-left: auto;
}

.aligners {
    display: flex;
    align-items: center;
    gap: 8px;
    padding: 0 6px;
    color: #8e8e8e;
}

.aligners.auto {
    padding: 0 8px;
}

.mode-label {
    margin: 0 2px 0 4px;
    color: #b4b4b4;
}

/* Workspace */
.workspace {
    flex: 1;
    min-height: 0;
    display: flex;
}

.dock-head {
    flex: none;
    height: 12px;
    display: flex;
    align-items: center;
    padding: 0 4px;
    background: linear-gradient(#474747, #383838);
    border-bottom: 1px solid #2c2c2c;
}

.grip {
    display: block;
    width: 20px;
    height: 4px;
    margin: 4px auto;
    background: repeating-linear-gradient(90deg, #303030 0 1px, transparent 1px 2px);
}

.tools {
    flex: none;
    width: 72px;
    border-right: 2px solid #2f2f2f;
}

.tool-group {
    display: grid;
    grid-template-columns: 31px 31px;
    gap: 2px;
    justify-content: center;
    margin: 0 4px;
    padding: 2px 0;
    border-bottom: 1px solid #373737;
}

.grip + .tool-group {
    padding-top: 4px;
}

.tool-group.last {
    border: 0;
}

.tool {
    height: 24px;
    display: grid;
    place-items: center;
    position: relative;
    color: #b9b9b9;
}

.tool svg {
    width: 18px;
    height: 18px;
}

.tool.on {
    background: #383838;
    border: 1px solid #2b2b2b;
    border-radius: 2px;
}

.fly::after {
    content: "";
    position: absolute;
    right: 2px;
    bottom: 1px;
    border-left: 3px solid transparent;
    border-bottom: 3px solid #ddd;
}

.type-tool {
    font: 22px/24px "Liberation Serif", serif;
}

.swatch-pair {
    position: relative;
    height: 44px;
    margin: 2px 0 13px;
}

.swatch {
    position: absolute;
    width: 24px;
    height: 24px;
    border: 1px solid #fff;
    outline: 1px solid #222;
}

.swatch.front {
    left: 13px;
    top: 2px;
    background: #4c4c4c;
}

.swatch.back {
    left: 28px;
    top: 18px;
    background: #f9fcae;
}

.swap {
    position: absolute;
    left: 44px;
    top: 0;
    color: #b9b9b9;
}

.defaults {
    position: absolute;
    left: 11px;
    top: 34px;
}

.view-modes {
    display: flex;
    gap: 16px;
    padding-left: 8px;
}

.document {
    flex: 1;
    min-width: 0;
    display: flex;
    flex-direction: column;
    border-right: 2px solid #2b2b2b;
}

.doc-tabs {
    flex: none;
    display: flex;
    height: 19px;
    background: linear-gradient(#434343, #363636);
}

.doc-tab {
    display: flex;
    gap: 8px;
    padding: 0 8px;
    background: #4e4e4e;
    color: #ddd;
    font: 600 11px/20px "Open Sans", sans-serif;
    white-space: nowrap;
}

.doc-body {
    flex: 1;
    min-height: 0;
    display: flex;
    background: #282828;
}

.stage {
    flex: 1;
    display: grid;
    place-items: center;
}

.artboard {
    width: 458px;
    height: 344px;
    background: #f9fcae;
    color: #4a4a4a;
    font: 900 76px/342px Lato, sans-serif;
    text-align: center;
    -webkit-text-stroke: 5px #4a4a4a;
    box-shadow: 2px 3px 5px rgba(0, 0, 0, .5);
}

.scroll-v {
    width: 18px;
    background: linear-gradient(90deg, #323232, #464646);
}

.doc-status {
    flex: none;
    height: 16px;
    display: flex;
    background: #4b4b4b;
    line-height: 16px;
    text-align: center;
    color: #eee;
}

.zoom-level {
    width: 62px;
    background: #3d3d3d;
}

.doc-icon {
    width: 23px;
    display: grid;
    place-items: center;
    border-right: 1px solid #333;
}

.doc-size {
    width: 171px;
    border-right: 1px solid #333;
}

.play {
    width: 13px;
    background: #5e5e5e;
    display: grid;
    place-items: center;
}

.play::before {
    content: "";
    border: 4px solid transparent;
    border-left: 6px solid #eee;
    border-right: 0;
}

.scroll-h {
    flex: 1;
    background: linear-gradient(#343434, #474747);
}

.corner {
    width: 18px;
    background: #535353;
}

/* Right dock */
.dock {
    flex: none;
    width: 254px;
    display: flex;
    flex-direction: column;
}

.dock-head.split {
    display: grid;
    grid-template-columns: 1fr auto;
    padding-left: 26px;
}

.dock-cols {
    flex: 1;
    min-height: 0;
    display: flex;
}

.strip {
    flex: none;
    width: 40px;
    border-right: 2px solid #2f2f2f;
}

.strip-btn {
    display: flex;
    flex-direction: column;
    align-items: center;
    gap: 6px;
    width: 100%;
    height: 41px;
    border-top: 1px solid #606060;
    border-bottom: 1px solid #333;
    color: #c0c0c0;
}

.strip-btn .grip {
    margin: 4px 0 0;
}

.fx-tile {
    width: 17px;
    height: 18px;
    background: linear-gradient(#8e8e8e 0 0) 3px 0 / 14px 14px no-repeat;
    font: italic 17px/20px "Liberation Serif", serif;
    color: #eee;
}

.panels {
    flex: 1;
    min-width: 0;
    display: flex;
    flex-direction: column;
}

.tabs {
    flex: none;
    display: flex;
    align-items: center;
    height: 17px;
    background: linear-gradient(#444, #393939);
    color: #999;
}

.tabs svg {
    margin: 0 4px 0 auto;
}

.tab {
    height: 17px;
    padding: 0 4px 0 6px;
    border-right: 1px solid #2c2c2c;
}

.tab.on {
    background: #535353;
    color: #eee;
}

.character {
    padding-bottom: 4px;
    border-bottom: 3px solid #313131;
}

.block {
    display: grid;
    align-items: center;
    margin-right: 8px;
    border-bottom: 1px solid #6a6a6a;
    box-shadow: 0 -1px #444 inset;
}

.block:last-child {
    border: 0;
    box-shadow: none;
}

.fonts {
    grid-template-columns: 106px 70px;
    gap: 10px;
    padding: 6px 0 5px 9px;
}

.metrics {
    grid-template-columns: 17px 76px 20px 70px;
    gap: 4px;
    padding: 4px 0 4px 2px;
}

.scales {
    grid-template-columns: 18px 55px 54px 55px;
    gap: 2px 4px;
    padding: 4px 0 5px 2px;
}

.glyph {
    display: flex;
    align-items: center;
    justify-content: center;
    height: 16px;
    color: #c0c0c0;
    font: 17px/16px "Liberation Serif", serif;
}

.glyph small {
    font-size: 13px;
    color: #999;
}

.glyph.sans {
    font: 12px/14px "Liberation Sans", sans-serif;
}

.glyph.stacked span {
    display: flex;
    flex-direction: column;
}

.glyph.stacked b {
    font: 9px/8px "Liberation Sans", sans-serif;
    border-top: 1px solid #c0c0c0;
}

.glyph.tracking {
    flex-direction: column;
}

.glyph.tracking b {
    background: #b0b0b0;
    color: #333;
    line-height: 11px;
}

.glyph.hscale {
    flex-direction: column;
    justify-self: end;
    font-weight: 700;
    font-size: 15px;
    line-height: 12px;
}

.glyph.shift small {
    font-size: 10px;
}

.num {
    width: 100%;
    height: 17px;
    padding: 0 4px;
    background: #3d3d3d;
    border: 1px solid #303030;
    color: #f0f0f0;
}

.color-well {
    background: #4a4a4a;
}

.color-label {
    text-align: right;
    padding-right: 2px;
    color: #ddd;
}

.faux {
    grid-template-columns: repeat(8, 24px);
    padding-left: 6px;
    height: 32px;
    color: #c4c4c4;
}

.faux button {
    font: 17px/20px "Liberation Serif", serif;
    white-space: nowrap;
}

.faux button:nth-child(3) {
    font-size: 14px;
}

.faux small {
    font-size: 12px;
}

.faux sup,
.faux sub {
    font-size: 9px;
    line-height: 0;
}

.opentype {
    color: #8a8a8a;
}

.over {
    text-decoration: overline;
}

.lang {
    grid-template-columns: 107px 1fr 60px;
    padding: 4px 0 0 7px;
}

.aa {
    text-align: center;
    font: 13px/16px "Liberation Sans", sans-serif;
    color: #bbb;
}

.aa sup {
    font-size: 11px;
    line-height: 0;
}

.layers {
    flex: 1;
    min-height: 0;
    display: flex;
    flex-direction: column;
}

.layer-row {
    flex: none;
    display: flex;
    align-items: center;
    gap: 4px;
    height: 28px;
    padding: 0 4px;
    border-bottom: 1px solid #6a6a6a;
    color: #e0e0e0;
}

.filter {
    height: 29px;
}

.locks {
    height: 30px;
    border-bottom: 1px solid #333;
}

.kind {
    width: 64px;
}

.kind select {
    padding-left: 18px;
}

.kind svg {
    position: absolute;
    left: 6px;
    top: 4px;
}

.filter-icons {
    flex: 1;
    display: flex;
    align-items: center;
    justify-content: space-between;
    padding: 0 8px 0 6px;
    color: #bcbcbc;
}

.serif-t {
    font: 700 17px/17px "Liberation Serif", serif;
}

.switch {
    width: 9px;
    height: 18px;
    background: linear-gradient(#999 0 45%, #3a3a3a 45%);
    border: 1px solid #2c2c2c;
}

.blend {
    flex: 1;
}

.pct {
    width: 48px;
}

.locks svg {
    margin-left: 4px;
    color: #bcbcbc;
}

.locks .dim {
    color: #8a8a8a;
}

.locks label {
    margin-left: auto;
}

.layer-list {
    flex: 1;
    min-height: 0;
    padding-right: 15px;
    background: linear-gradient(90deg, #3c3c3c, #484848) right / 15px 100% no-repeat, #494949;
}

.layer {
    display: flex;
    align-items: center;
    height: 32px;
    background: #535353;
    border-bottom: 1px solid #3a3a3a;
    color: #f0f0f0;
}

.current {
    background: #5a6678;
}

.eye {
    align-self: stretch;
    width: 31px;
    padding-left: 9px;
    background: #535353;
    border-right: 1px solid #3a3a3a;
}

.thumb {
    position: relative;
    width: 32px;
    height: 25px;
    margin: 0 8px 0 3px;
    border: 1px solid #111;
}

.thumb.yellow {
    background: #f9fcae;
}

.checker {
    background: repeating-conic-gradient(#ccc 0 25%, #fff 0 50%) 0 0 / 8px 8px;
}

.thumb i {
    position: absolute;
    left: 2px;
    top: 8px;
    color: #333;
    font: 700 5px/7px "Open Sans", sans-serif;
}

.badge {
    position: absolute;
    right: -1px;
    bottom: -1px;
    background: #5a6678;
    color: #ccd4e0;
    border-left: 1px solid #111;
    border-top: 1px solid #111;
}

.corners {
    position: absolute;
    left: -3px;
    top: -3px;
}

.layer-actions {
    flex: none;
    height: 18px;
    display: flex;
    align-items: center;
    justify-content: space-between;
    padding: 0 28px 0 11px;
    border-top: 1px solid #6a6a6a;
    color: #c4c4c4;
}

.fx {
    font: italic 700 14px/16px "Liberation Serif", serif;
}
```
